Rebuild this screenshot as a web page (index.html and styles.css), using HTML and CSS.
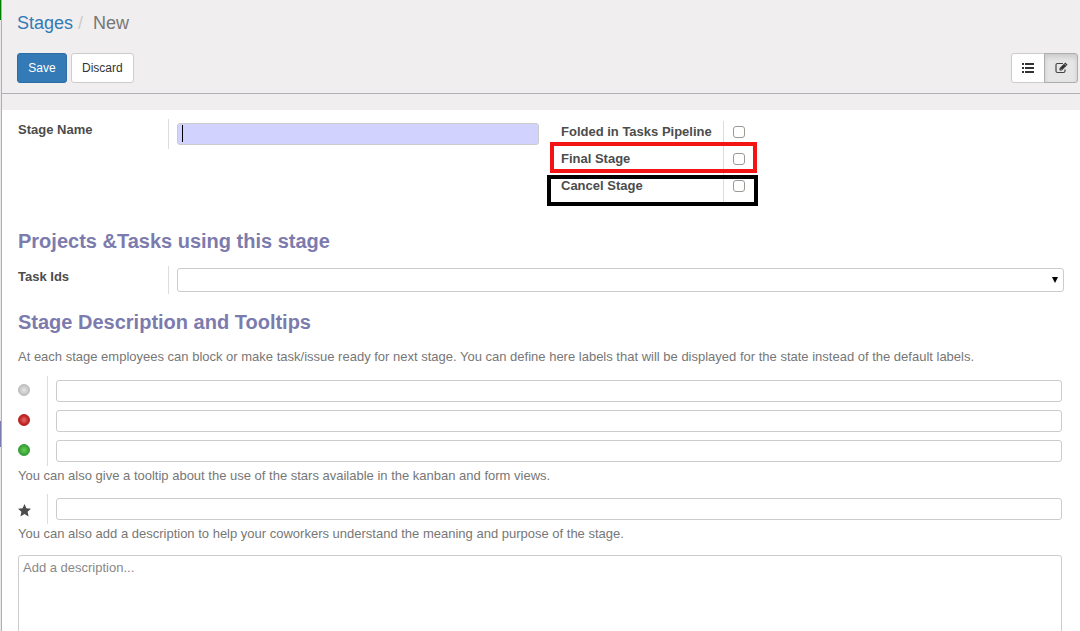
FILE: index.html
```html
<!DOCTYPE html>
<html lang="en">
<head>
<meta charset="utf-8">
<title>Stages / New</title>
<link rel="stylesheet" href="styles.css">
</head>
<body>
<div class="app">
  <div class="rail"><span class="rail-top"></span><span class="rail-active"></span></div>
  <div class="main">
    <header class="control-panel">
      <nav class="breadcrumb"><a href="#">Stages</a><span class="slash">/</span><span>New</span></nav>
      <div class="toolbar">
        <div class="actions">
          <button type="button" class="btn btn-primary">Save</button>
          <button type="button" class="btn">Discard</button>
        </div>
        <div class="switcher">
          <button type="button" class="view" aria-label="List view">
            <svg width="12" height="10" viewBox="0 0 12 10" fill="#333"><path d="M0 0h2v2H0zM3 0h9v2H3zM0 4h2v2H0zM3 4h9v2H3zM0 8h2v2H0zM3 8h9v2H3z"/></svg>
          </button>
          <button type="button" class="view active" aria-label="Form view">
            <svg width="13" height="12" viewBox="0 0 13 12"><path d="M8 1.500H2.500Q1 1.500 1 3v6q0 1.500 1.500 1.500h6Q10 10.500 10 9V7.500" fill="none" stroke="#444" stroke-width="1.200"/><path d="M4.500 8.500V6.300L10.300.5l2.200 2.200-5.800 5.800z" fill="#333"/><path d="M5.500 6.700l1 1M9.500 1.900l1.700 1.700" stroke="#e6e6e6" stroke-width=".7"/></svg>
          </button>
        </div>
      </div>
    </header>
    <main class="sheet">
      <div class="top">
        <div class="field">
          <label for="name">Stage Name</label>
          <div class="value"><input class="text required" id="name" type="text"><span class="caret"></span></div>
        </div>
        <div class="checks">
          <div class="check"><label for="folded">Folded in Tasks Pipeline</label><div class="tick"><input id="folded" type="checkbox"></div></div>
          <div class="check"><label for="final">Final Stage</label><div class="tick"><input id="final" type="checkbox"></div><span class="mark mark-red"></span></div>
          <div class="check"><label for="cancel">Cancel Stage</label><div class="tick"><input id="cancel" type="checkbox"></div><span class="mark mark-black"></span></div>
        </div>
      </div>
      <h2>Projects &amp;Tasks using this stage</h2>
      <div class="field task">
        <label for="tasks">Task Ids</label>
        <div class="value"><select id="tasks"><option></option></select><svg class="arrow" width="6" height="6" viewBox="0 0 6 6"><path d="M0 0h6L3 6z"/></svg></div>
      </div>
      <h2>Stage Description and Tooltips</h2>
      <p>At each stage employees can block or make task/issue ready for next stage. You can define here labels that will be displayed for the state instead of the default labels.</p>
      <div class="legend"><span class="dot grey"></span><div class="value"><input class="text" type="text" aria-label="Normal state label"></div></div>
      <div class="legend"><span class="dot red"></span><div class="value"><input class="text" type="text" aria-label="Blocked state label"></div></div>
      <div class="legend"><span class="dot green"></span><div class="value"><input class="text" type="text" aria-label="Ready state label"></div></div>
      <p class="hint">You can also give a tooltip about the use of the stars available in the kanban and form views.</p>
      <div class="legend">
        <svg class="star" width="13" height="13" viewBox="0 0 13 13"><path d="M6.500 0l1.900 4.200 4.600.5-3.400 3.100 1 4.700-4.100-2.400-4.100 2.400 1-4.700L0 4.700l4.600-.5z" fill="#4c4c4c"/></svg>
        <div class="value"><input class="text" type="text" aria-label="Priority tooltip"></div>
      </div>
      <p class="hint">You can also add a description to help your coworkers understand the meaning and purpose of the stage.</p>
      <textarea placeholder="Add a description..." aria-label="Description"></textarea>
    </main>
  </div>
</div>
</body>
</html>
```
FILE: styles.css
```css
* { box-sizing: border-box; }
html, body { height: 100%; }
body {
  margin: 0;
  overflow: hidden;
  font: 13px/20px "Liberation Sans", Arial, sans-serif;
  color: #4c4c4c;
  background: #f0eeee;
}
.app { display: flex; min-height: 100%; }
.rail { position: relative; width: 1px; background: #e8e8ea; }
.rail-top, .rail-active { position: absolute; left: 0; width: 1px; }
.rail-top { top: 0; height: 20px; background: #008000; }
.rail-active { top: 421px; height: 26px; background: #7c7bad; }
.main { flex: 1; min-width: 0; border-left: 1px solid #afafb6; }

.control-panel {
  padding: 10px 2px 10px 15px;
  border-bottom: 1px solid #afafb6;
}
.breadcrumb { font-size: 18px; line-height: 27px; color: #777; }
.breadcrumb a { color: #337ab7; text-decoration: none; }
.slash { padding: 0 10px 0 5px; color: #ccc; }
.toolbar { display: flex; justify-content: space-between; margin-top: 16px; }
.actions { display: flex; gap: 4px; }
.btn {
  height: 30px;
  min-width: 50px;
  padding: 0 10px;
  font: 12px/18px "Liberation Sans", Arial, sans-serif;
  color: #333;
  background: #fff;
  border: 1px solid #ccc;
  border-radius: 3px;
}
.btn-primary { color: #fff; background: #337ab7; border-color: #2e6da4; }
.switcher { display: flex; }
.view {
  display: flex;
  align-items: center;
  justify-content: center;
  width: 34px;
  height: 30px;
  padding: 0;
  background: #fff;
  border: 1px solid #ccc;
  border-radius: 3px 0 0 3px;
}
.view.active {
  margin-left: -1px;
  background: #e6e6e6;
  border-color: #adadad;
  border-radius: 0 3px 3px 0;
  box-shadow: inset 0 3px 5px rgba(0, 0, 0, .125);
}

.sheet { margin-top: 16px; padding: 9px 18px 0 16px; background: #fff; }
.top { display: grid; grid-template-columns: 1fr 1fr; margin-right: 2px; }
.field { display: grid; grid-template-columns: 150px 1fr; align-items: start; line-height: 22px; }
.top .field { align-self: start; }
label { font-weight: bold; }
.value { position: relative; padding: 4px 0 4px 8px; border-left: 1px solid #ddd; }
.text {
  display: block;
  width: 100%;
  height: 22px;
  padding: 2px 4px;
  font: inherit;
  background: #fff;
  border: 1px solid #ccc;
  border-radius: 3px;
}
.required { background: #d2d2ff; }
.caret { position: absolute; left: 13px; top: 6px; width: 1px; height: 17px; background: #000; }
.checks { padding: 2px 0 0 22px; }
.check { position: relative; display: grid; grid-template-columns: 162px 1fr; height: 27px; line-height: 22px; }
.tick { padding: 5px 0 0 9px; border-left: 1px solid #ddd; }
.tick input {
  display: block;
  appearance: none;
  width: 12px;
  height: 12px;
  margin: 0;
  background: #fff;
  border: 1px solid #9a9a94;
  border-radius: 3px;
}
.mark { position: absolute; height: 31px; border: 4px solid; pointer-events: none; }
.mark-red { left: -11px; top: -6px; width: 207px; border-color: #f31414; }
.mark-black { left: -14px; top: 0; width: 211px; border-color: #000; }

h2 { margin: 26px 0 12px; font-size: 20px; line-height: 26px; color: #7c7bad; }
.task { margin-right: -2px; }
.task .value { padding: 2px 0 2px 8px; }
select {
  display: block;
  appearance: none;
  width: 100%;
  height: 24px;
  font: inherit;
  background: #fff;
  border: 1px solid #ccc;
  border-radius: 3px;
}
.arrow { position: absolute; right: 6px; top: 11px; pointer-events: none; }
.task + h2 { margin: 15px 0 12px; }
p { margin: 0 0 10px; line-height: 19px; color: #777; }
.legend { display: grid; grid-template-columns: 29px 1fr; align-items: center; }
.dot { width: 12px; height: 12px; border-radius: 50%; margin-top: -2px; }
.grey { background: radial-gradient(circle, #e0e0e0 10%, #bdbdbd 80%); border: 1px solid #bbb; }
.red { background: radial-gradient(circle, #e06060 10%, #c02020 65%); border: 1px solid #b62020; }
.green { background: radial-gradient(circle, #5ec84c 10%, #36a036 70%); border: 1px solid #359a35; }
.star { margin-top: 2px; }
.hint { margin: 0 0 9px; }
.hint + textarea { margin-top: 12px; }
textarea {
  display: block;
  width: 100%;
  height: 100px;
  padding: 2px 4px;
  font: inherit;
  background: #fff;
  border: 1px solid #ccc;
  border-radius: 3px;
  resize: none;
}
textarea::placeholder { color: #888; }
```
